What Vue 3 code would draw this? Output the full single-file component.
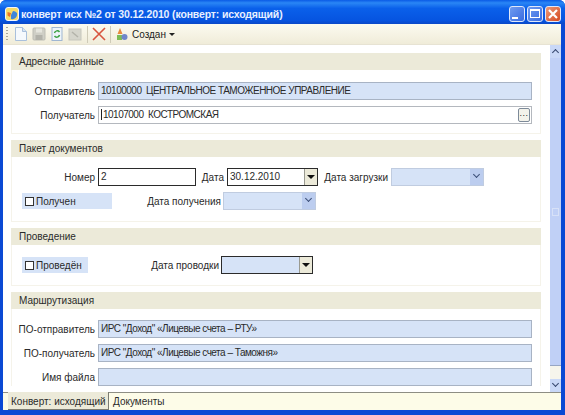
<script setup>
</script>

<template>
  <div class="window">
    <div class="titlebar">
      <svg class="app-icon" width="16" height="16" viewBox="0 0 16 16">
        <rect x="1.500" y="1.500" width="13" height="13" rx="2.500" fill="#f6dc6a" stroke="#f4f6fb" />
        <path d="M7 13a5 5 0 0 0 6-6 5 5 0 0 0-4-2l-2 4z" fill="#3f86d8" />
        <path d="M3.500 6l3.500 1-1 4-2.500-1.500z" fill="#e8742a" />
      </svg>
      <span class="title">конверт исх №2 от 30.12.2010 (конверт: исходящий)</span>
      <div class="win-buttons">
        <span class="win-btn"><i class="min"></i></span>
        <span class="win-btn"><i class="max"></i></span>
        <span class="win-btn close">
          <svg width="12" height="12" viewBox="0 0 12 12"><path d="M2 2l8 8M10 2l-8 8" stroke="#fff" stroke-width="2.2" /></svg>
        </span>
      </div>
    </div>

    <div class="inner">
      <div class="toolbar">
        <span class="grip"></span>
        <svg class="tool" width="16" height="16" viewBox="0 0 16 16">
          <path d="M2.500 1.500h7l4 4v9h-11z" fill="#f5f9fd" stroke="#a9c0dc" />
          <path d="M9.500 1.500v4h4" fill="#d6e4f3" stroke="#a9c0dc" />
        </svg>
        <svg class="tool" width="16" height="16" viewBox="0 0 16 16">
          <rect x="2" y="2" width="12" height="12" rx="1" fill="#cfcfc6" stroke="#bdbdb4" />
          <rect x="5" y="2.500" width="6" height="4" fill="#e6e6de" />
          <rect x="4.500" y="9" width="7" height="5" fill="#b2b2aa" />
        </svg>
        <svg class="tool" width="16" height="16" viewBox="0 0 16 16">
          <rect x="3" y="1.500" width="10" height="13" fill="#eef4fa" stroke="#9fb6d2" />
          <path d="M5.500 7a2.800 2.800 0 0 1 5-1M10.500 9a2.800 2.800 0 0 1-5 1" fill="none" stroke="#3aa040" stroke-width="1.500" />
        </svg>
        <svg class="tool" width="16" height="16" viewBox="0 0 16 16">
          <rect x="2" y="3" width="12" height="11" fill="#d5d5cc" stroke="#c6c6bd" />
          <path d="M5 6l6 5" stroke="#b3b3aa" stroke-width="1.500" />
        </svg>
        <span class="sep"></span>
        <svg class="tool del" width="16" height="16" viewBox="0 0 16 16">
          <path d="M2 2l12 12M14 2L2 14" stroke="#d8553f" stroke-width="1.600" />
        </svg>
        <span class="sep"></span>
        <svg class="tool" width="16" height="16" viewBox="0 0 16 16">
          <path d="M6 2l2.500 6h-5z" fill="#e88a3c" />
          <rect x="3" y="9" width="5" height="5" fill="#7dbb55" />
          <circle cx="10.500" cy="11" r="3" fill="#6f86c9" />
        </svg>
        <span class="status">Создан</span>
        <span class="caret"></span>
      </div>

      <div class="content">
        <div class="scroll-area">
          <section class="group address">
            <h3>Адресные данные</h3>
            <div class="group-body">
              <div class="row">
                <label class="lbl wide">Отправитель</label>
                <div class="field grow">10100000&nbsp; ЦЕНТРАЛЬНОЕ ТАМОЖЕННОЕ УПРАВЛЕНИЕ</div>
              </div>
              <div class="row">
                <label class="lbl wide">Получатель</label>
                <div class="field grow white">
                  <i class="cursor"></i>10107000&nbsp; КОСТРОМСКАЯ
                  <span class="dots">...</span>
                </div>
              </div>
            </div>
          </section>

          <section class="group package">
            <h3>Пакет документов</h3>
            <div class="group-body">
              <div class="row">
                <label class="lbl wide">Номер</label>
                <div class="field edit num">2</div>
                <label class="lbl date-lbl">Дата</label>
                <div class="field edit date">30.12.2010<span class="drop"></span></div>
                <label class="lbl load-lbl">Дата загрузки</label>
                <div class="field select load"><span class="chev"></span></div>
              </div>
              <div class="row">
                <div class="check got"><span class="box"></span>Получен</div>
                <label class="lbl got-lbl">Дата получения</label>
                <div class="field select got-sel"><span class="chev"></span></div>
              </div>
            </div>
          </section>

          <section class="group posting">
            <h3>Проведение</h3>
            <div class="group-body">
              <div class="row">
                <div class="check posted"><span class="box"></span>Проведён</div>
                <label class="lbl post-lbl">Дата проводки</label>
                <div class="field post-sel"><span class="drop"></span></div>
              </div>
            </div>
          </section>

          <section class="group routing">
            <h3>Маршрутизация</h3>
            <div class="group-body">
              <div class="row">
                <label class="lbl wide">ПО-отправитель</label>
                <div class="field grow">ИРС "Доход" «Лицевые счета – РТУ»</div>
              </div>
              <div class="row">
                <label class="lbl wide">ПО-получатель</label>
                <div class="field grow">ИРС "Доход" «Лицевые счета – Таможня»</div>
              </div>
              <div class="row">
                <label class="lbl wide">Имя файла</label>
                <div class="field grow"></div>
              </div>
            </div>
          </section>
        </div>

        <div class="scrollbar">
          <span class="sb-btn up"><span class="sb-chev"></span></span>
          <span class="sb-thumb"><i></i></span>
          <span class="sb-track"></span>
          <span class="sb-btn down"><span class="sb-chev"></span></span>
        </div>
      </div>

      <div class="tabs">
        <span class="tab active">Конверт: исходящий</span>
        <span class="tab">Документы</span>
      </div>
    </div>
  </div>
</template>

<style>
html, body {
  margin: 0;
  background: #fff;
}
</style>

<style scoped>
.window {
  width: 565px;
  height: 415px;
  box-sizing: border-box;
  display: flex;
  flex-direction: column;
  padding: 0 4px 5px 3px;
  border-radius: 6px 6px 0 0;
  background: #0a49d4;
  font-family: "Liberation Sans", sans-serif;
  font-size: 10px;
  color: #2a2a2a;
  overflow: hidden;
}

.titlebar {
  height: 24px;
  flex: none;
  box-sizing: border-box;
  display: flex;
  align-items: center;
  margin: 0 -4px 0 -3px;
  padding: 3px 4px 0 4px;
  background: linear-gradient(#0a5be6 0, #2a86f5 12%, #0a60ea 35%, #0654e0 85%, #0a48c8 100%);
}

.app-icon {
  flex: none;
  margin-right: 1px;
}

.title {
  color: #e8f0ff;
  font-size: 10.5px;
  font-weight: bold;
  letter-spacing: -0.15px;
  white-space: nowrap;
}

.win-buttons {
  margin-left: auto;
  display: flex;
  gap: 2px;
}

.win-btn {
  width: 16px;
  height: 16px;
  box-sizing: border-box;
  display: flex;
  align-items: center;
  justify-content: center;
  border: 1px solid #dfe8fa;
  border-radius: 3px;
  background: linear-gradient(135deg, #6f9bf0, #3a6ce0);
}

.win-btn.close {
  background: linear-gradient(135deg, #ec9a78, #d64a20);
}

.win-btn .min {
  width: 6px;
  height: 2px;
  background: #fff;
  align-self: flex-end;
  margin: 0 5px 2px 0;
}

.win-btn .max {
  width: 8px;
  height: 6px;
  border: 1px solid #fff;
  border-top-width: 2px;
}

.inner {
  flex: 1;
  min-height: 0;
  display: flex;
  flex-direction: column;
  background: #fff;
}

.toolbar {
  height: 21px;
  flex: none;
  display: flex;
  align-items: center;
  box-sizing: border-box;
  border-bottom: 1px solid #e7e3d3;
  background: linear-gradient(#fbfaf0, #f0ecd9);
}

.grip {
  width: 2px;
  height: 15px;
  margin: 0 5px 0 3px;
  background: repeating-linear-gradient(#a8a79a 0 1px, transparent 1px 3px);
}

.tool {
  flex: none;
  margin-right: 2px;
}

.tool.del {
  margin-right: 1px;
}

.sep {
  width: 1px;
  height: 17px;
  margin: 0 3px 0 2px;
  background: #cfcbb8;
}

.status {
  color: #1c1c1c;
}

.caret {
  width: 0;
  height: 0;
  margin-left: 3px;
  border: 3px solid transparent;
  border-top: 3px solid #222;
  border-bottom: 0;
}

.content {
  flex: 1;
  min-height: 0;
  display: flex;
}

.scroll-area {
  flex: 1;
  min-width: 0;
  padding: 8px 4px 0 8px;
  overflow: hidden;
}

.group {
  border: 1px solid #f5f3ea;
  border-top: 0;
  margin-bottom: 6px;
  box-sizing: border-box;
}

.group h3 {
  margin: 0 -1px;
  height: 17px;
  line-height: 18px;
  padding-left: 8px;
  font-size: 10px;
  font-weight: normal;
  background: #ecead9;
}

.group-body {
  display: flex;
  flex-direction: column;
}

.address { height: 81px; }
.address .group-body { padding-top: 12px; gap: 6px; }
.package { height: 82px; }
.package .group-body { padding-top: 11px; gap: 6px; }
.posting { height: 58px; }
.posting .group-body { padding-top: 11px; }
.routing { border-bottom: 0; margin-bottom: 0; }
.routing .group-body { padding-top: 11px; gap: 6px; }

.row {
  display: flex;
  align-items: center;
  padding-right: 8px;
}

.lbl {
  white-space: nowrap;
  text-align: right;
  flex: none;
}

.lbl.wide {
  width: 83px;
  margin-right: 3px;
}

.field {
  height: 18px;
  line-height: 16px;
  box-sizing: border-box;
  border: 1px solid #a8b3c4;
  background: #d6e3f7;
  padding-left: 2px;
  position: relative;
  flex: none;
  white-space: nowrap;
}

.field.grow {
  flex: 1;
  letter-spacing: -0.5px;
}

.field.white {
  background: #fff;
  border-color: #b4b8be;
}

.field.edit {
  border-color: #2b2b2b;
  background: #fff;
}

.cursor {
  display: inline-block;
  width: 1px;
  height: 11px;
  margin-right: 1px;
  vertical-align: -2px;
  background: #222;
}

.num { width: 98px; }
.date { width: 91px; }
.date-lbl { width: 28px; margin-right: 3px; }
.load-lbl { width: 70px; margin-right: 3px; }
.load { width: 93px; }
.select { border-color: #c0cce0; }

.dots {
  position: absolute;
  right: 1px;
  top: 1px;
  box-sizing: border-box;
  width: 12px;
  height: 14px;
  line-height: 9px;
  text-align: center;
  font-size: 9px;
  letter-spacing: 0.5px;
  border: 1px solid #7d8a99;
  border-radius: 2px;
  background: #f3f2ea;
}

.drop {
  position: absolute;
  right: 0;
  top: 0;
  bottom: 0;
  width: 12px;
  border-left: 1px solid #9a9a90;
  background: #ecead9;
}

.drop::after {
  content: "";
  position: absolute;
  left: 2px;
  top: 6px;
  border: 4px solid transparent;
  border-top: 4px solid #111;
  border-bottom: 0;
}

.chev {
  position: absolute;
  right: 0;
  top: 0;
  bottom: 0;
  width: 13px;
  background: #bccdef;
}

.chev::after {
  content: "";
  position: absolute;
  left: 4px;
  top: 3px;
  width: 4px;
  height: 4px;
  border-right: 1.500px solid #3c4f78;
  border-bottom: 1.500px solid #3c4f78;
  transform: rotate(45deg);
}

.check {
  height: 16px;
  flex: none;
  display: flex;
  align-items: center;
  background: #d6e3f7;
  padding-left: 3px;
  box-sizing: border-box;
  margin-left: 10px;
}

.box {
  width: 9px;
  height: 9px;
  box-sizing: border-box;
  margin-right: 2px;
  border: 1px solid #333;
  background: #fff;
}

.got { width: 90px; }
.posted { width: 66px; }
.got-lbl { width: 109px; margin-right: 2px; }
.got-sel { width: 93px; }
.post-lbl { width: 131px; margin-right: 2px; }
.post-sel {
  width: 92px;
  border-color: #2b2b2b;
}

.scrollbar {
  width: 11px;
  flex: none;
  margin-left: 5px;
  display: flex;
  flex-direction: column;
  background: #f6f5ec;
}

.sb-btn {
  height: 13px;
  flex: none;
  display: flex;
  justify-content: center;
  background: #c9d8f7;
}

.sb-chev {
  width: 4px;
  height: 4px;
  margin-top: 5px;
  border-left: 1.500px solid #34466e;
  border-top: 1.500px solid #34466e;
  transform: rotate(45deg);
}

.down .sb-chev {
  margin-top: 2px;
  transform: rotate(225deg);
}

.sb-thumb {
  flex: 1;
  display: flex;
  align-items: center;
  justify-content: center;
  background: #c0d0f6;
  border-bottom: 1px solid #97a6c4;
}

.sb-thumb i {
  width: 5px;
  height: 6px;
  border: 1px solid #d7e1f8;
}

.sb-track {
  height: 13px;
  flex: none;
}

.tabs {
  height: 18px;
  flex: none;
  display: flex;
  box-sizing: border-box;
  padding-left: 5px;
  border-top: 1px solid #8e8e84;
  background: #fdfce8;
}

.tab {
  padding: 0 4px;
  line-height: 17px;
  white-space: nowrap;
}

.tab.active {
  width: 101px;
  box-sizing: border-box;
  height: 18px;
  margin-top: -1px;
  padding: 1px 0 0 3px;
  background: #ecead9;
  border-right: 1px solid #7c7c72;
  border-bottom: 1px solid #7c7c72;
}
</style>
